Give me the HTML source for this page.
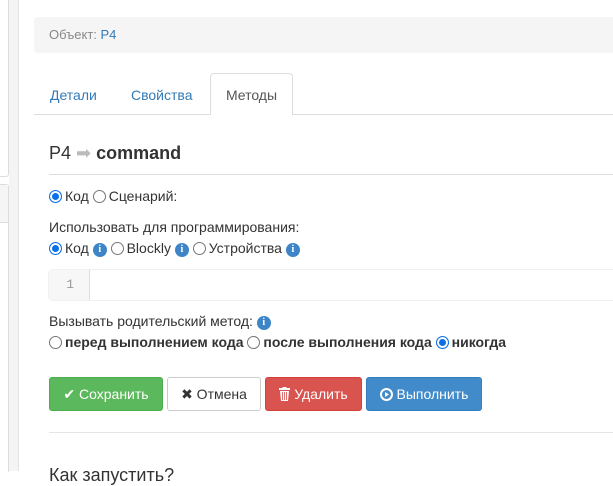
<!DOCTYPE html><html><head><meta charset="utf-8"><style>
body{margin:0;width:613px;height:471px;overflow:hidden;background:#fff;font-family:"Liberation Sans",sans-serif;font-size:14px;color:#333;position:relative}
.a{position:absolute}
.rad{display:inline-block;width:13px;height:13px;border:1px solid #767676;border-radius:50%;box-sizing:border-box;vertical-align:-2px;margin-right:3px;background:#fff}
.rad.on{border-color:#0b6fe8;box-shadow:inset 0 0 0 2px #fff;background:#0b6fe8;border-width:1px}
.i{display:inline-block;width:14px;height:14px;border-radius:50%;background:#3d85c6;color:#fff;font-size:10px;font-weight:bold;text-align:center;line-height:14px;vertical-align:1px;font-family:"Liberation Serif",serif}
.btn{position:absolute;top:377px;height:34px;border-radius:3px;box-sizing:border-box;font-size:14px;line-height:32px;text-align:center;color:#fff}
</style></head><body>
<div class="a" style="left:0;top:0;width:8px;height:176px;border-right:1px solid #ddd;border-bottom:1px solid #ddd;border-radius:0 0 3px 0"></div>
<div class="a" style="left:9px;top:0;width:9px;height:471px;background:#f4f4f4;border-right:1px solid #e3e3e3"></div>
<div class="a" style="left:0;top:184px;width:8px;height:287px;border-right:1px solid #ddd;border-top:1px solid #ddd;border-radius:0 3px 0 0"></div>
<div class="a" style="left:0;top:185px;width:8px;height:37px;background:#f5f5f5;border-bottom:1px solid #ddd"></div>
<div class="a" style="left:34px;top:17px;width:590px;height:36px;background:#f5f5f5;border-radius:4px;line-height:36px;padding-left:15px;color:#888;box-sizing:border-box;font-size:13px">Объект: <span style="color:#337ab7">P4</span></div>
<div class="a" style="left:34px;top:114px;width:590px;border-top:1px solid #ddd"></div>
<div class="a" style="left:50px;top:87px;color:#337ab7;font-size:14px">Детали</div>
<div class="a" style="left:131px;top:87px;color:#337ab7;font-size:14px">Свойства</div>
<div class="a" style="left:210px;top:73px;width:83px;height:42px;border:1px solid #ddd;border-bottom:none;border-radius:4px 4px 0 0;background:#fff;box-sizing:border-box;text-align:center;line-height:42px;font-size:14px;color:#555">Методы</div>
<div class="a" style="left:49px;top:143px;font-size:18px;color:#333">P4 <span style="color:#bbb">➡</span> <b>command</b></div>
<div class="a" style="left:49px;top:174px;width:570px;border-top:1px solid #ddd"></div>
<div class="a" style="left:49px;top:188px"><span class="rad on"></span>Код <span class="rad"></span>Сценарий:</div>
<div class="a" style="left:49px;top:219px">Использовать для программирования:</div>
<div class="a" style="left:49px;top:240px"><span class="rad on"></span>Код <span class="i">i</span> <span class="rad"></span>Blockly <span class="i">i</span> <span class="rad"></span>Устройства <span class="i">i</span></div>
<div class="a" style="left:49px;top:270px;width:570px;height:30px;border-radius:4px;background:#fff;box-shadow:0 0 0 1px #f0f0f0"></div>
<div class="a" style="left:49px;top:270px;width:41px;height:30px;background:#f7f7f7;border-right:1px solid #ddd;border-radius:4px 0 0 4px;font-family:'Liberation Mono',monospace;color:#999;line-height:30px;text-align:right;box-sizing:border-box;padding-right:15px;font-size:13px">1</div>
<div class="a" style="left:49px;top:313px">Вызывать родительский метод: <span class="i">i</span></div>
<div class="a" style="left:49px;top:334px;font-weight:bold"><span class="rad"></span>перед выполнением кода <span class="rad"></span>после выполнения кода <span class="rad on"></span>никогда</div>
<div class="btn" style="left:49px;width:114px;background:#5cb85c;border:1px solid #4cae4c">✔ Сохранить</div>
<div class="btn" style="left:167px;width:94px;background:#fff;border:1px solid #ccc;color:#333">✖ Отмена</div>
<div class="btn" style="left:265px;width:97px;background:#d9534f;border:1px solid #d43f3a"><svg width="11" height="14" viewBox="0 0 11 14" style="vertical-align:-2px"><rect x="0" y="1" width="11" height="2" fill="#fff"/><rect x="3.5" y="0" width="4" height="2" fill="#fff"/><path d="M1 4h9l-1 10H2z" fill="#fff"/><path d="M3.5 5v8M5.5 5v8M7.5 5v8" stroke="#d9534f" stroke-width="0.8"/></svg> Удалить</div>
<div class="btn" style="left:366px;width:116px;background:#428bca;border:1px solid #357ebd"><svg width="13" height="13" viewBox="0 0 13 13" style="vertical-align:-2px"><circle cx="6.5" cy="6.5" r="5.5" fill="none" stroke="#fff" stroke-width="2"/><path d="M5 4v5l4-2.5z" fill="#fff"/></svg> Выполнить</div>
<div class="a" style="left:49px;top:432px;width:570px;border-top:1px solid #e5e5e5"></div>
<div class="a" style="left:49px;top:465px;font-size:18px">Как запустить?</div>
</body></html>
